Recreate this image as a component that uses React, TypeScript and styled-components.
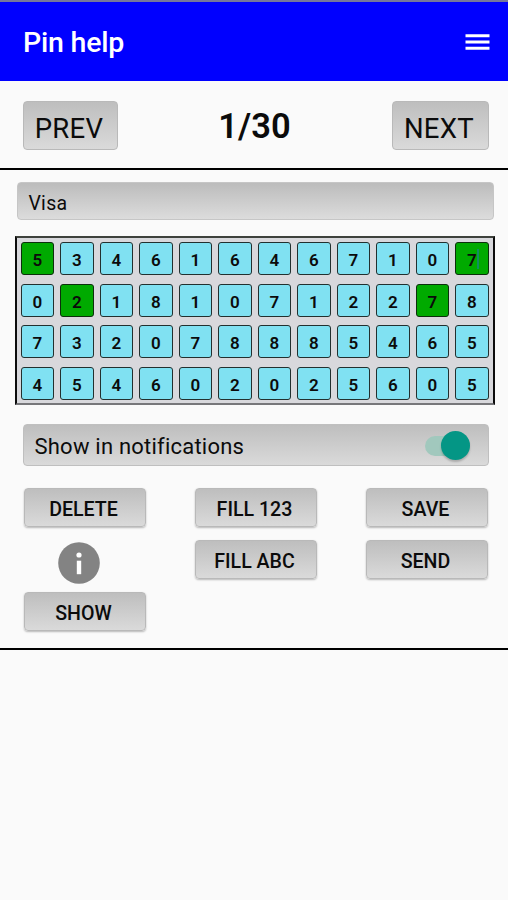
import React, { useState } from "react";
import styled, { createGlobalStyle } from "styled-components";

const GlobalStyle = createGlobalStyle`
  *, *::before, *::after { box-sizing: border-box; }
  body {
    margin: 0;
    background: #fafafa;
    color: #0b0b0b;
    font-family: Roboto, "Liberation Sans", sans-serif;
  }
  button, input { font: inherit; color: inherit; }
`;

const Screen = styled.main`
  width: 508px;
  height: 900px;
  overflow: hidden;
  background: #fafafa;
`;

const AppBar = styled.header`
  display: flex;
  align-items: center;
  justify-content: space-between;
  height: 81px;
  padding: 1px 18px 0 23px;
  border-top: 2px solid #77779b;
  background: #0000ff;
  color: #fff;
`;

const Title = styled.h1`
  margin: 0;
  padding-top: 2px;
  font-size: 28.5px;
  line-height: 32px;
  font-weight: 500;
  letter-spacing: -0.2px;
`;

const MenuButton = styled.button`
  display: flex;
  padding: 0;
  border: 0;
  background: none;
`;

const Pager = styled.nav`
  display: flex;
  align-items: center;
  justify-content: space-between;
  height: 88.5px;
  padding: 2px 19px 0 23px;
  border-bottom: 2.5px solid #000;
`;

const Counter = styled.output`
  padding: 1px 1px 0 0;
  font-size: 34.5px;
  line-height: 40px;
  font-weight: 600;
`;

const Raised = styled.button`
  display: flex;
  align-items: center;
  justify-content: center;
  padding: 0;
  border: 1px solid #b9b9b9;
  border-radius: 4px;
  background: linear-gradient(#bebebe, #dadada);
`;

const PageButton = styled(Raised)<{ $width: number }>`
  width: ${(p) => p.$width}px;
  height: 49px;
  padding: 7px 3px 0 0;
  font-size: 27.5px;
  line-height: 32px;
  font-weight: 400;
  letter-spacing: 0.3px;
`;

const Editor = styled.section`
  display: flex;
  flex-direction: column;
  height: 480px;
  padding: 12px 0 0;
  border-bottom: 2.5px solid #000;
`;

const NameField = styled.input`
  width: 477px;
  height: 38px;
  margin-left: 17.4px;
  padding: 6px 10px 0;
  border: 1px solid #c6c6c6;
  border-radius: 4px;
  outline: 0;
  background: linear-gradient(#bcbcbc, #dcdcdc);
  font-size: 19.5px;
  letter-spacing: 0.3px;
`;

const PinGrid = styled.div`
  display: grid;
  grid-template-columns: repeat(12, 33.5px);
  grid-auto-rows: 33px;
  column-gap: 6px;
  row-gap: 8.6px;
  width: 480px;
  height: 169px;
  margin: 16px 0 0 14.5px;
  padding: 4.5px 0 0 4px;
  border: 2px solid #0c0c0c;
  border-bottom-color: #77777a;
  border-top-color: #3e413c;
  background: #d8d8dc;
`;

const Cell = styled.div<{ $marked: boolean }>`
  display: flex;
  align-items: center;
  justify-content: center;
  padding-top: 3px;
  border: 1.5px solid ${(p) => (p.$marked ? "#0c2f0c" : "#22302f")};
  border-radius: 3px;
  background: ${(p) => (p.$marked ? "#00aa00" : "#80e1f2")};
  font-size: 17px;
  line-height: 20px;
  font-weight: 600;
`;

const Caret = styled.span`
  width: 2px;
  height: 20px;
  margin: -3px -2px 0 0;
  background: #0f8f62;
`;

const NotifyRow = styled.label`
  display: flex;
  align-items: center;
  justify-content: space-between;
  width: 466px;
  height: 42px;
  margin: 19px 0 0 23px;
  padding: 0 18px 0 10.5px;
  border: 1px solid #bfbfbf;
  border-radius: 4px;
  background: linear-gradient(#bebebe, #dadada);
`;

const NotifyText = styled.span`
  padding-top: 5px;
  font-size: 22px;
  line-height: 28px;
  letter-spacing: 0.22px;
`;

const Track = styled.button`
  display: flex;
  align-items: center;
  justify-content: flex-end;
  width: 45px;
  height: 20px;
  padding: 0;
  margin-top: 2px;
  border: 0;
  border-radius: 10px;
  background: #a1c8bd;
`;

const Thumb = styled.span`
  flex: none;
  width: 29px;
  height: 29px;
  border-radius: 50%;
  background: #049685;
  box-shadow: 0 2px 2px #0003;
`;

const Actions = styled.div`
  display: grid;
  grid-template-columns: repeat(3, 122px);
  grid-auto-rows: 39px;
  column-gap: 49px;
  row-gap: 13px;
  margin: 22px 0 0 24px;
`;

const ActionButton = styled(Raised)`
  padding: 6px 3px 0 0;
  box-shadow: 0 1px 2px #0004;
  font-size: 19.6px;
  line-height: 24px;
  font-weight: 500;
`;

const InfoButton = styled.button`
  display: flex;
  justify-self: center;
  align-self: center;
  padding: 0;
  margin: 7px 12px 0 0;
  border: 0;
  background: none;
`;

const rows = ["534616467107", "021810712278", "732078885465", "454602025605"];
const marked = new Set(["0-0", "0-11", "1-1", "1-10"]);

function MenuIcon() {
  return (
    <svg width="25" height="18" viewBox="0 0 25 18" fill="#fff">
      <path d="M.5 1.2h24v3H.5zM.5 7.5h24v3H.5zM.5 13.8h24v3H.5z" />
    </svg>
  );
}

function InfoIcon() {
  return (
    <svg width="42" height="42" viewBox="0 0 42 42">
      <circle cx="21" cy="21" r="20.8" fill="#838383" />
      <circle cx="21" cy="13" r="2.6" fill="#fff" />
      <path d="M18.8 18.7h4.4v13.5h-4.4z" fill="#fff" />
    </svg>
  );
}

export default function App() {
  const [name, setName] = useState("Visa");
  return (
    <Screen>
      <GlobalStyle />
      <AppBar>
        <Title>Pin help</Title>
        <MenuButton aria-label="Menu">
          <MenuIcon />
        </MenuButton>
      </AppBar>
      <Pager>
        <PageButton $width={95}>PREV</PageButton>
        <Counter>1/30</Counter>
        <PageButton $width={97}>NEXT</PageButton>
      </Pager>
      <Editor>
        <NameField value={name} onChange={(e) => setName(e.target.value)} aria-label="Card name" />
        <PinGrid>
          {rows.flatMap((row, r) =>
            [...row].map((digit, c) => (
              <Cell key={`${r}-${c}`} $marked={marked.has(`${r}-${c}`)}>
                {digit}
                {r === 0 && c === 11 && <Caret />}
              </Cell>
            ))
          )}
        </PinGrid>
        <NotifyRow>
          <NotifyText>Show in notifications</NotifyText>
          <Track role="switch" aria-checked="true" aria-label="Show in notifications">
            <Thumb />
          </Track>
        </NotifyRow>
        <Actions>
          <ActionButton>DELETE</ActionButton>
          <ActionButton>FILL 123</ActionButton>
          <ActionButton>SAVE</ActionButton>
          <InfoButton aria-label="Information">
            <InfoIcon />
          </InfoButton>
          <ActionButton>FILL ABC</ActionButton>
          <ActionButton>SEND</ActionButton>
          <ActionButton>SHOW</ActionButton>
        </Actions>
      </Editor>
    </Screen>
  );
}
